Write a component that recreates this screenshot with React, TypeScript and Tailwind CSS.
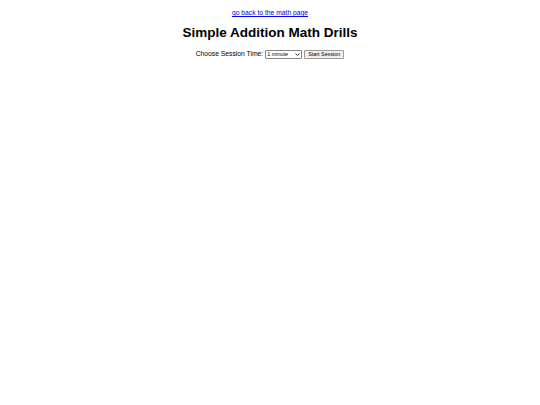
export default function App() {
  return (
    <div className="min-h-screen bg-white px-[3px] pt-[9px] text-center font-['Liberation_Sans',Arial,sans-serif] text-[6.75px] text-black">
      <p className="leading-[1.15]">
        <a href="#" className="text-[#0000ee] underline">go back to the math page</a>
      </p>
      <h1 className="mt-[8px] text-[13.5px] font-bold leading-[1.15]">Simple Addition Math Drills</h1>
      <div className="mt-[9px] flex items-center justify-center gap-[2px]">
        <span>Choose Session Time:</span>
        <div className="relative">
          <select className="block h-[9px] w-[37px] appearance-none rounded-[1px] border border-[#858585] bg-white pl-[1px] text-left text-[5.4px] leading-none">
            <option>1 minute</option>
            <option>2 minutes</option>
            <option>5 minutes</option>
          </select>
          <svg className="pointer-events-none absolute right-[2px] top-[3px] h-[3px] w-[5px]" viewBox="0 0 10 6" fill="none" stroke="#333" strokeWidth="2">
            <path d="M1 1l4 4 4-4" />
          </svg>
        </div>
        <button className="h-[9px] rounded-[1px] border border-[#9a9a9a] bg-[#efefef] px-[3px] text-[5.4px] leading-none">
          Start Session
        </button>
      </div>
    </div>
  );
}
